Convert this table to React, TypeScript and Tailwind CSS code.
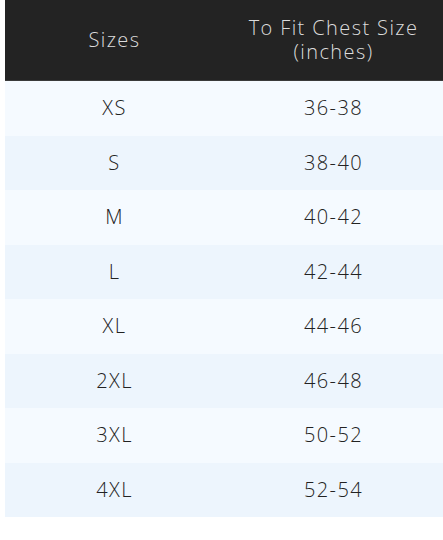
const rows = [
  ["XS", "36-38"],
  ["S", "38-40"],
  ["M", "40-42"],
  ["L", "42-44"],
  ["XL", "44-46"],
  ["2XL", "46-48"],
  ["3XL", "50-52"],
  ["4XL", "52-54"],
]

export default function App() {
  return (
    <div className="min-h-[540px] bg-white pl-[5px] font-['Open_Sans','Lato',sans-serif] tracking-[1.4px]">
      <div className="w-[438px]">
        <div className="grid h-[81px] grid-cols-2 items-center border-b border-[#3a3a3a] bg-[#232323] text-[20px] font-light text-[#dcdcdc]">
          <div className="text-center">Sizes</div>
          <div className="flex flex-col items-center gap-[2px] leading-[22px]">
            <span>To Fit Chest Size</span>
            <span>(inches)</span>
          </div>
        </div>
        {rows.map(([size, chest], i) => (
          <div
            key={size}
            className={
              "grid h-[54.5px] grid-cols-2 items-center text-[20px] font-light text-[#222]" +
              (i % 2 === 0 ? " bg-[#f5faff]" : " bg-[#edf5fd]")
            }
          >
            <div className="text-center">{size}</div>
            <div className="text-center">{chest}</div>
          </div>
        ))}
      </div>
    </div>
  )
}
